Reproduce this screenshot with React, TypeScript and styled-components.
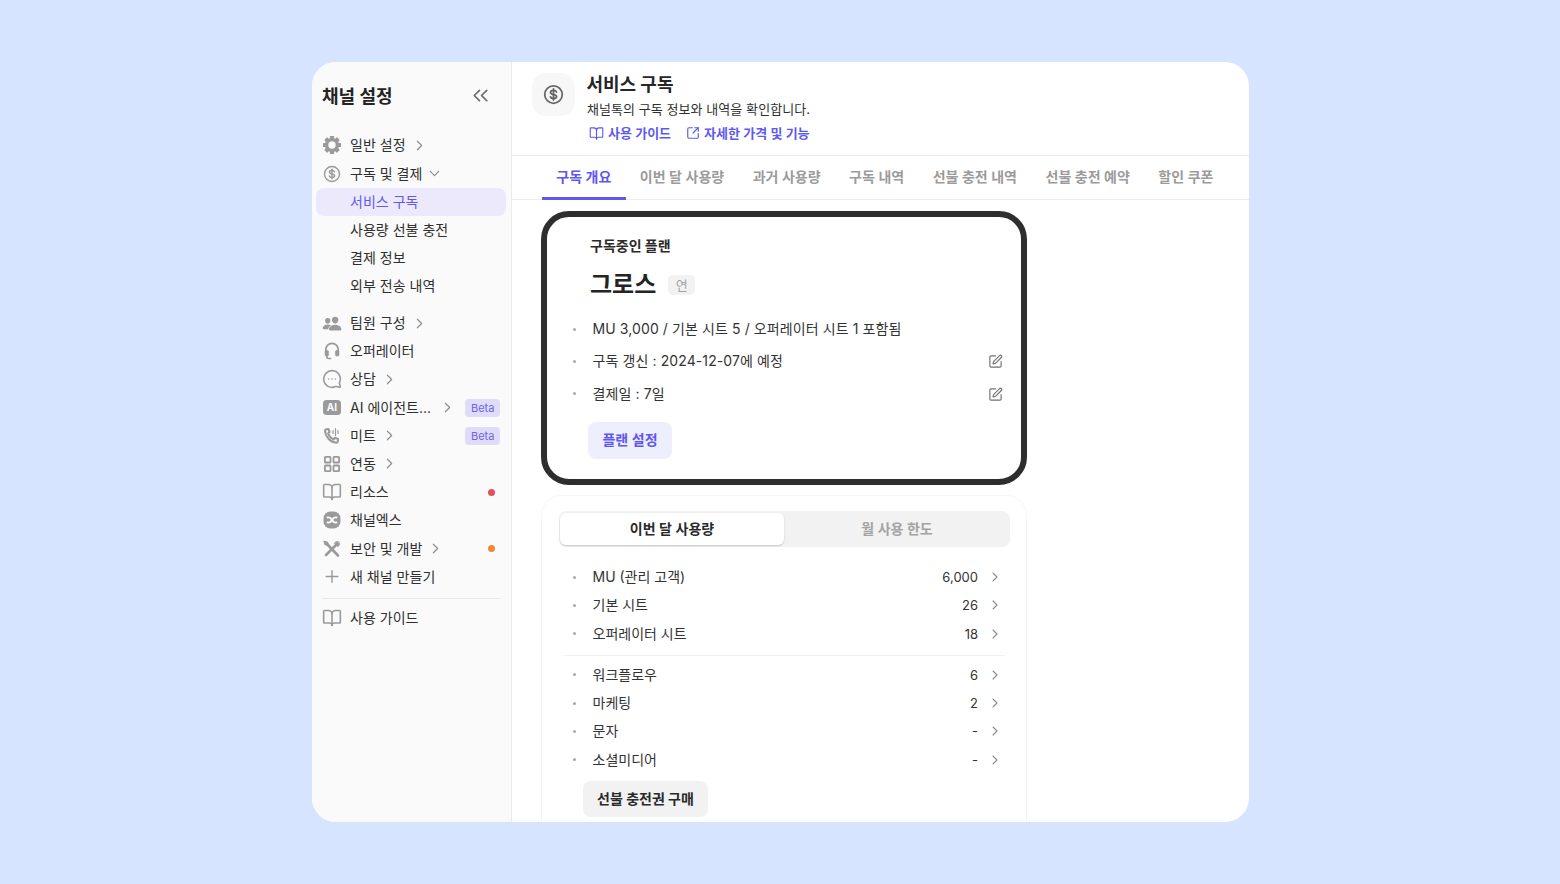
import React from "react";
import styled, { createGlobalStyle } from "styled-components";
import {
  ChevronRight, ChevronDown, ChevronsLeft, BookOpen, SquareArrowOutUpRight, SquarePen,
  MessageCircleMore, Plus,
} from "lucide-react";
import { IoPeople } from "react-icons/io5";

const Global = createGlobalStyle`
  html, body { margin: 0; padding: 0; height: 100%; }
  body {
    background: #d6e4ff;
    font-family: Inter, "Noto Sans CJK KR", "Noto Sans", sans-serif;
    color: #2b2b2b;
    overflow: hidden;
  }
  * { box-sizing: border-box; }
`;

const Stage = styled.div`
  height: 884px;
  padding: 62px 311px 62px 312px;
`;
const Win = styled.div`
  height: 760px;
  border-radius: 24px;
  background: #fff;
  overflow: hidden;
  display: flex;
`;
const Side = styled.aside`
  width: 200px;
  flex: none;
  background: #fafafa;
  border-right: 1px solid #ececec;
  padding: 0 5px 0 4px;
`;
const SideHead = styled.div`
  height: 66px;
  display: flex;
  align-items: center;
  justify-content: space-between;
  padding: 0 13px 0 6px;
`;
const SideTitle = styled.h1`
  margin: 0;
  font-size: 18px;
  font-weight: 700;
  color: #242424;
`;
const CollapseIcon = styled.span`
  display: flex;
  color: #6b6b6b;
`;
const NavList = styled.nav`
  display: flex;
  flex-direction: column;
  padding-top: 3.3px;
`;
const NavGroup = styled.div<{ $gap?: number }>`
  display: flex;
  flex-direction: column;
  margin-top: ${(p) => p.$gap ?? 0}px;
`;
const NavRow = styled.div<{ $active?: boolean }>`
  height: 28.2px;
  display: flex;
  align-items: center;
  border-radius: 8px;
  padding: 0 6px;
  font-size: 14px;
  line-height: 20px;
  letter-spacing: 0.02px;
  color: ${(p) => (p.$active ? "#6259f0" : "#2f2f2f")};
  background: ${(p) => (p.$active ? "#ebe9fb" : "transparent")};
`;
const NavIcon = styled.span`
  width: 20px;
  height: 20px;
  flex: none;
  margin-right: 8px;
  display: flex;
  align-items: center;
  justify-content: center;
  color: #9a9a9a;
`;
const NavIndent = styled.span`
  width: 28px;
  flex: none;
`;
const NavClipped = styled.span`
  width: 84px;
  flex: none;
`;
const NavChevron = styled.span<{ $gap?: number }>`
  display: flex;
  margin-left: ${(p) => p.$gap ?? 5}px;
  color: #8f8f8f;
`;
const Spacer = styled.span`
  flex: 1;
`;
const Beta = styled.span`
  font-size: 11px;
  line-height: 18px;
  height: 18px;
  padding: 0 5.5px;
  border-radius: 4px;
  background: #dfdcfa;
  color: #6d64ee;
`;
const Dot = styled.span<{ $color: string }>`
  width: 7px;
  height: 7px;
  border-radius: 50%;
  background: ${(p) => p.$color};
  margin-right: 5px;
`;
const SideRule = styled.hr`
  border: 0;
  border-top: 1px solid #e8e8e8;
  margin: 7px 6px 5.4px;
`;

const Main = styled.main`
  flex: 1;
  min-width: 0;
  display: flex;
  flex-direction: column;
`;
const Header = styled.header`
  height: 94px;
  flex: none;
  display: flex;
  gap: 12px;
  padding: 11px 20px 0;
  border-bottom: 1px solid #ececec;
`;
const HeaderIcon = styled.div`
  width: 43px;
  height: 43px;
  border-radius: 14px;
  background: #f7f7f7;
  color: #666;
  display: flex;
  align-items: center;
  justify-content: center;
`;
const HeaderText = styled.div`
  display: flex;
  flex-direction: column;
`;
const PageTitle = styled.h2`
  margin: 0 0 0 -0.6px;
  font-size: 18px;
  line-height: 24px;
  font-weight: 700;
  color: #262626;
`;
const PageDesc = styled.p`
  margin: 2px 0 0;
  font-size: 13px;
  line-height: 20px;
  letter-spacing: 0.06px;
  color: #2f2f2f;
`;
const HeaderLinks = styled.div`
  display: flex;
  gap: 15px;
  margin-top: 4px;
  padding-left: 2px;
`;
const HeaderLink = styled.a`
  display: flex;
  align-items: center;
  gap: 4px;
  font-size: 13px;
  line-height: 20px;
  font-weight: 600;
  color: #5e5af0;
`;
const Tabs = styled.div`
  height: 44px;
  flex: none;
  display: flex;
  padding-left: 30px;
  border-bottom: 1px solid #ececec;
`;
const Tab = styled.div<{ $active?: boolean }>`
  height: 44px;
  padding: 0 14.25px 2px;
  display: flex;
  align-items: center;
  font-size: 14px;
  font-weight: 600;
  color: ${(p) => (p.$active ? "#5e58f0" : "#9b9b9b")};
  border-bottom: 3px solid ${(p) => (p.$active ? "#5e58f0" : "transparent")};
`;
const Content = styled.div`
  flex: 1;
  min-height: 0;
  overflow: hidden;
  padding: 11px 0 0 29px;
  display: flex;
  flex-direction: column;
  gap: 10px;
`;
const PlanCard = styled.section`
  width: 486px;
  height: 274px;
  flex: none;
  border: 6px solid #2e2e2e;
  border-radius: 28px;
  padding: 19px 25px 0 25px;
`;
const PlanLabel = styled.div`
  font-size: 14px;
  line-height: 20px;
  font-weight: 700;
  color: #2b2b2b;
  padding-left: 18px;
`;
const PlanNameRow = styled.div`
  display: flex;
  align-items: center;
  gap: 12px;
  margin-top: 13px;
  padding-left: 18px;
`;
const PlanName = styled.div`
  font-size: 24px;
  line-height: 32px;
  font-weight: 700;
  color: #242424;
`;
const Chip = styled.span`
  width: 27px;
  height: 20px;
  border-radius: 5px;
  background: #f2f2f2;
  color: #a3a3a3;
  font-size: 13px;
  line-height: 20px;
  text-align: center;
`;
const InfoList = styled.ul`
  list-style: none;
  margin: 11px 0 0;
  padding: 0;
  display: flex;
  flex-direction: column;
`;
const InfoRow = styled.li`
  height: 32.3px;
  display: flex;
  align-items: center;
  font-size: 14px;
  letter-spacing: 0.1px;
  color: #333;
`;
const Bullet = styled.span`
  width: 3px;
  height: 3px;
  border-radius: 50%;
  background: #a8a8a8;
  flex: none;
  margin: 2px 16.5px 0 1px;
`;
const EditIcon = styled.span`
  margin: 3px -7px 0 auto;
  display: flex;
  color: #6f6f6f;
`;
const PrimaryButton = styled.button`
  margin: 13px 0 0 16px;
  width: 84px;
  height: 37px;
  border: 0;
  border-radius: 8px;
  background: #efeefd;
  color: #5e56f0;
  font: 600 14px Inter, "Noto Sans CJK KR", sans-serif;
  padding: 0 0 2px;
`;
const UsageCard = styled.section`
  width: 486px;
  flex: none;
  border: 1px solid #f5f5f5;
  border-radius: 20px;
  padding: 15px 16px 24px 17px;
`;
const Segment = styled.div`
  height: 36px;
  background: #f2f2f2;
  border-radius: 8px;
  display: flex;
  padding: 2px 0 2px 1px;
`;
const SegmentItem = styled.div<{ $active?: boolean }>`
  flex: ${(p) => (p.$active ? "none" : "1")};
  width: ${(p) => (p.$active ? "224px" : "auto")};
  display: flex;
  align-items: center;
  justify-content: center;
  padding-bottom: 2px;
  border-radius: 6px;
  font-size: 14px;
  font-weight: 600;
  background: ${(p) => (p.$active ? "#fff" : "transparent")};
  color: ${(p) => (p.$active ? "#2a2a2a" : "#a3a3a3")};
  box-shadow: ${(p) => (p.$active ? "0 1px 2px rgba(0,0,0,.18)" : "none")};
`;
const UsageList = styled.ul<{ $top: number }>`
  list-style: none;
  margin: ${(p) => p.$top}px 0 0;
  padding: 0;
`;
const UsageRow = styled.li`
  height: 28.25px;
  display: flex;
  align-items: center;
  font-size: 14px;
  color: #333;
  padding-left: 13px;
`;
const UsageValue = styled.span`
  margin: 2px 0 0 auto;
  font-size: 13px;
`;
const RowChevron = styled.span`
  display: flex;
  margin: 2px 7px 0 9px;
  color: #8c8c8c;
`;
const UsageRule = styled.hr`
  border: 0;
  border-top: 1px solid #f0f0f0;
  margin: 8px 5px 4px;
`;
const SecondaryButton = styled.button`
  display: block;
  margin: 8px 0 0 24px;
  width: 125px;
  height: 36px;
  border: 0;
  border-radius: 8px;
  background: #f2f2f2;
  color: #2a2a2a;
  font: 700 14px Inter, "Noto Sans CJK KR", sans-serif;
  padding: 0 0 2px;
`;

const DollarIcon = ({ size, sw }: { size: number; sw: number }) => (
  <svg width={size} height={size} viewBox="0 0 24 24" fill="none" stroke="currentColor" strokeWidth={sw} strokeLinecap="round" strokeLinejoin="round">
    <circle cx="12" cy="12" r="10" />
    <path d="M15.4 9.2c-.4-1.1-1.7-1.8-3.4-1.8-1.9 0-3.4.9-3.4 2.3 0 3.3 6.9 1.4 6.9 4.7 0 1.4-1.5 2.3-3.5 2.3-1.8 0-3.1-.8-3.5-2" />
    <path d="M12 5.6v12.8" />
  </svg>
);
const GearIcon = () => (
  <svg width="20" height="20" viewBox="0 0 20 20" fill="currentColor">
    <circle cx="10" cy="10" r="5.4" fill="none" stroke="currentColor" strokeWidth="3.4" />
    {[0, 45, 90, 135, 180, 225, 270, 315].map((a) => (
      <rect key={a} x="7.9" y="1" width="4.2" height="3.6" rx="0.6" transform={`rotate(${a} 10 10)`} />
    ))}
  </svg>
);
const HeadsetIcon = () => (
  <svg width="18" height="18" viewBox="0 0 18 18" fill="none" stroke="currentColor" strokeLinecap="round" strokeLinejoin="round">
    <path d="M2.800 9.500V7.600a6.200 6.200 0 0 1 12.400 0v1.900" strokeWidth="1.700" />
    <rect x="2" y="8.500" width="3.600" height="5.500" rx="1.300" fill="currentColor" strokeWidth="0.600" />
    <rect x="12.400" y="8.500" width="3.600" height="5.500" rx="1.300" fill="currentColor" strokeWidth="0.600" />
    <path d="M4 14v1.200c0 .8.600 1.300 1.300 1.300h2.200" strokeWidth="1.700" />
  </svg>
);
const GridIcon = () => (
  <svg width="18" height="18" viewBox="0 0 18 18" fill="none" stroke="currentColor" strokeWidth="1.800">
    <rect x="1.900" y="1.900" width="5.600" height="5.600" rx="0.600" />
    <rect x="10.500" y="1.900" width="5.600" height="5.600" rx="0.600" />
    <rect x="1.900" y="10.500" width="5.600" height="5.600" rx="0.600" />
    <rect x="10.500" y="10.500" width="5.600" height="5.600" rx="0.600" />
  </svg>
);
const AiIcon = () => (
  <svg width="18" height="15" viewBox="0 0 18 15">
    <rect width="18" height="15" rx="3.500" fill="currentColor" />
    <text x="9" y="11.300" textAnchor="middle" fontSize="10" fontWeight="700" fill="#fafafa" fontFamily="Inter, sans-serif">AI</text>
  </svg>
);
const CallIcon = () => (
  <svg width="18" height="18" viewBox="0 0 18 18" fill="none" stroke="currentColor" strokeWidth="2.100" strokeLinecap="round" strokeLinejoin="round">
    <path d="M3.200 2.200 5.400 2l1.200 3-1.400 1.200c.7 2.400 2.900 4.900 5.500 6l1.400-1.500 3 1.300-.3 2.400c-.1.8-.9 1.400-1.800 1.300C7.200 15 2.400 9.700 2 4c0-.9.400-1.700 1.200-1.800Z" />
    <path d="M10 3.500v3M12.500 1.500v7M15 3.500v3" strokeWidth="1.200" />
  </svg>
);
const ChannelXIcon = () => (
  <svg width="18" height="18" viewBox="0 0 18 18">
    <rect x="0.500" y="0.500" width="17" height="17" rx="7" fill="currentColor" />
    <path d="M4.500 6.500c2.500-.5 3.500.5 4.500 2.500s2 3 4.500 2.500M4.500 11.500c2.500.5 3.500-.5 4.500-2.500s2-3 4.500-2.500" fill="none" stroke="#fafafa" strokeWidth="1.800" strokeLinecap="round" />
  </svg>
);
const ToolsIcon = () => (
  <svg width="18" height="18" viewBox="0 0 18 18" fill="none" stroke="currentColor" strokeLinecap="round">
    <path d="M3.500 3.500 15 15.500" strokeWidth="2.600" />
    <path d="M14.500 3.500 3 15" strokeWidth="2.600" />
    <path d="M1.200 1.200 4.800 2.200 5.200 5.200 2.200 4.800Z" fill="currentColor" strokeWidth="1" />
    <path d="M11.500 3c1-1.300 2.700-1.700 4-1.200L13.700 3.600l.8.800 1.800-1.800c.5 1.300.1 3-1.200 4Z" fill="currentColor" strokeWidth="0.800" />
  </svg>
);
const FlippedChat = styled.span`
  display: flex;
  transform: scaleX(-1);
`;

const Chev = () => (
  <NavChevron>
    <ChevronRight size={17} strokeWidth={1.7} />
  </NavChevron>
);

const usageA = [
  ["MU (관리 고객)", "6,000"],
  ["기본 시트", "26"],
  ["오퍼레이터 시트", "18"],
];
const usageB = [
  ["워크플로우", "6"],
  ["마케팅", "2"],
  ["문자", "-"],
  ["소셜미디어", "-"],
];
const tabs = ["구독 개요", "이번 달 사용량", "과거 사용량", "구독 내역", "선불 충전 내역", "선불 충전 예약", "할인 쿠폰"];

const Usage = ({ label, value }: { label: string; value: string }) => (
  <UsageRow>
    <Bullet />
    {label}
    <UsageValue>{value}</UsageValue>
    <RowChevron>
      <ChevronRight size={16} strokeWidth={1.6} />
    </RowChevron>
  </UsageRow>
);

export default function App() {
  return (
    <>
      <Global />
      <Stage>
        <Win>
          <Side>
            <SideHead>
              <SideTitle>채널 설정</SideTitle>
              <CollapseIcon>
                <ChevronsLeft size={25} strokeWidth={1.6} />
              </CollapseIcon>
            </SideHead>
            <NavList>
              <NavGroup>
                <NavRow>
                  <NavIcon><GearIcon /></NavIcon>일반 설정<Chev />
                </NavRow>
                <NavRow>
                  <NavIcon><DollarIcon size={18} sw={1.9} /></NavIcon>구독 및 결제
                  <NavChevron $gap={4}><ChevronDown size={17} strokeWidth={1.7} /></NavChevron>
                </NavRow>
                <NavRow $active><NavIndent />서비스 구독</NavRow>
                <NavRow><NavIndent />사용량 선불 충전</NavRow>
                <NavRow><NavIndent />결제 정보</NavRow>
                <NavRow><NavIndent />외부 전송 내역</NavRow>
              </NavGroup>
              <NavGroup $gap={8.5}>
                <NavRow>
                  <NavIcon><IoPeople size={21} /></NavIcon>팀원 구성<Chev />
                </NavRow>
                <NavRow>
                  <NavIcon><HeadsetIcon /></NavIcon>오퍼레이터
                </NavRow>
                <NavRow>
                  <NavIcon><FlippedChat><MessageCircleMore size={20} strokeWidth={1.9} /></FlippedChat></NavIcon>상담<Chev />
                </NavRow>
                <NavRow>
                  <NavIcon><AiIcon /></NavIcon><NavClipped>AI 에이전트...</NavClipped><Chev /><Spacer /><Beta>Beta</Beta>
                </NavRow>
                <NavRow>
                  <NavIcon><CallIcon /></NavIcon>미트<Chev /><Spacer /><Beta>Beta</Beta>
                </NavRow>
                <NavRow>
                  <NavIcon><GridIcon /></NavIcon>연동<Chev />
                </NavRow>
                <NavRow>
                  <NavIcon><BookOpen size={20} strokeWidth={1.9} /></NavIcon>리소스<Spacer /><Dot $color="#e0505e" />
                </NavRow>
                <NavRow>
                  <NavIcon><ChannelXIcon /></NavIcon>채널엑스
                </NavRow>
                <NavRow>
                  <NavIcon><ToolsIcon /></NavIcon>보안 및 개발<Chev /><Spacer /><Dot $color="#ef8a34" />
                </NavRow>
                <NavRow>
                  <NavIcon><Plus size={27} strokeWidth={1.7} /></NavIcon>새 채널 만들기
                </NavRow>
              </NavGroup>
              <SideRule />
              <NavRow>
                <NavIcon><BookOpen size={20} strokeWidth={1.9} /></NavIcon>사용 가이드
              </NavRow>
            </NavList>
          </Side>
          <Main>
            <Header>
              <HeaderIcon><DollarIcon size={21} sw={2} /></HeaderIcon>
              <HeaderText>
                <PageTitle>서비스 구독</PageTitle>
                <PageDesc>채널톡의 구독 정보와 내역을 확인합니다.</PageDesc>
                <HeaderLinks>
                  <HeaderLink><BookOpen size={15} strokeWidth={1.8} />사용 가이드</HeaderLink>
                  <HeaderLink><SquareArrowOutUpRight size={14} strokeWidth={2} />자세한 가격 및 기능</HeaderLink>
                </HeaderLinks>
              </HeaderText>
            </Header>
            <Tabs>
              {tabs.map((t, i) => (
                <Tab key={t} $active={i === 0}>{t}</Tab>
              ))}
            </Tabs>
            <Content>
              <PlanCard>
                <PlanLabel>구독중인 플랜</PlanLabel>
                <PlanNameRow>
                  <PlanName>그로스</PlanName>
                  <Chip>연</Chip>
                </PlanNameRow>
                <InfoList>
                  <InfoRow><Bullet />MU 3,000 / 기본 시트 5 / 오퍼레이터 시트 1 포함됨</InfoRow>
                  <InfoRow><Bullet />구독 갱신 : 2024-12-07에 예정<EditIcon><SquarePen size={15} strokeWidth={1.8} /></EditIcon></InfoRow>
                  <InfoRow><Bullet />결제일 : 7일<EditIcon><SquarePen size={15} strokeWidth={1.8} /></EditIcon></InfoRow>
                </InfoList>
                <PrimaryButton>플랜 설정</PrimaryButton>
              </PlanCard>
              <UsageCard>
                <Segment>
                  <SegmentItem $active>이번 달 사용량</SegmentItem>
                  <SegmentItem>월 사용 한도</SegmentItem>
                </Segment>
                <UsageList $top={15}>
                  {usageA.map(([l, v]) => <Usage key={l} label={l} value={v} />)}
                </UsageList>
                <UsageRule />
                <UsageList $top={0}>
                  {usageB.map(([l, v]) => <Usage key={l} label={l} value={v} />)}
                </UsageList>
                <SecondaryButton>선불 충전권 구매</SecondaryButton>
              </UsageCard>
            </Content>
          </Main>
        </Win>
      </Stage>
    </>
  );
}
